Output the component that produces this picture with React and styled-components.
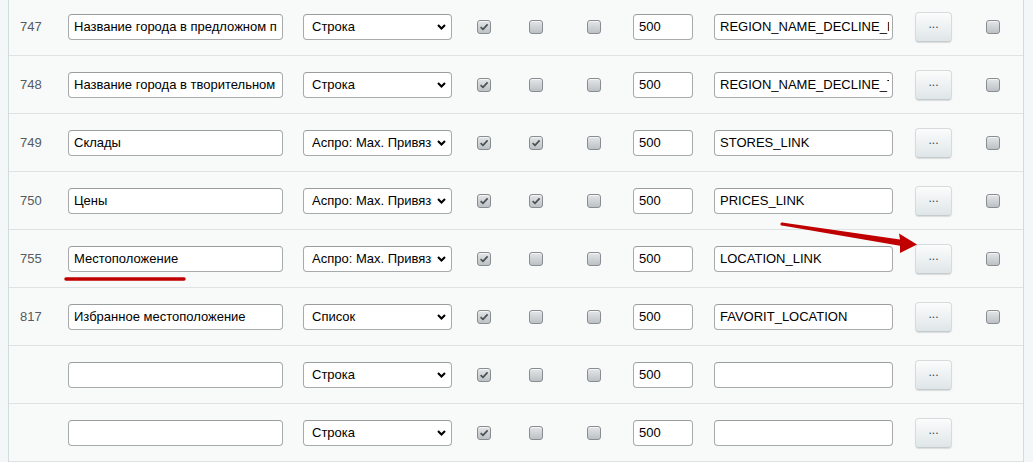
import styled, { createGlobalStyle } from "styled-components";

const GlobalStyle = createGlobalStyle`
  body {
    margin: 0;
    background: #f3f7f8;
    font-family: "Liberation Sans", Arial, sans-serif;
    font-size: 13px;
    overflow: hidden;
  }
`;

const Page = styled.div`
  position: relative;
  width: 1033px;
  height: 462px;
  overflow: hidden;
  padding: 0 9px 0 8px;
  box-sizing: border-box;
`;

const Table = styled.div`
  margin-top: -2px;
  background: #f8fafa;
  border-left: 1px solid #d3dbdc;
  border-right: 1px solid #d3dbdc;
`;

const Row = styled.div`
  display: grid;
  grid-template-columns: 59px 235px 174px 52px 58px 46px 81px 201px 71px 1fr;
  align-items: center;
  height: 57px;
  border-bottom: 1px solid #dde3e4;
`;

const Num = styled.div`
  padding-left: 11px;
  color: #555b5e;
`;

const Field = styled.input`
  box-sizing: border-box;
  width: ${(p) => p.$w}px;
  height: 26px;
  margin: 0;
  padding: 0 ${(p) => p.$pr ?? 3}px 0 5px;
  border: 1px solid #a7a9ab;
  border-top-color: #9a9c9e;
  border-radius: 4px;
  background: #fff;
  font-family: "Liberation Sans", Arial, sans-serif;
  font-size: 13px;
  color: #000;
  outline: none;
`;

const SelectBox = styled.div`
  box-sizing: border-box;
  width: 149px;
  height: 26px;
  display: flex;
  align-items: center;
  gap: 5px;
  padding: 0 5px 0 8px;
  border: 1px solid #a7a9ab;
  border-top-color: #9a9c9e;
  border-radius: 4px;
  background: #fff;
  color: #000;
`;

const SelectText = styled.span`
  flex: 1;
  overflow: hidden;
  white-space: nowrap;
`;

const Check = styled.span`
  box-sizing: border-box;
  width: 14px;
  height: 14px;
  display: flex;
  align-items: center;
  justify-content: center;
  border: 1px solid #888d91;
  border-radius: 3px;
  background: linear-gradient(#e3e6e8, #bcc1c5);
  box-shadow: inset 0 1px 0 rgba(255, 255, 255, 0.6);
`;

const DotsButton = styled.button`
  width: 37px;
  height: 30px;
  padding: 0 0 6px;
  border: 1px solid #d6dbdd;
  border-bottom-color: #c5cbce;
  border-radius: 4px;
  background: linear-gradient(#fbfcfc, #dfe6e8);
  box-shadow: 0 1px 1px rgba(0, 0, 0, 0.12);
  font-family: "Liberation Sans", Arial, sans-serif;
  font-size: 12px;
  font-weight: normal;
  color: #2f4458;
  line-height: 1;
`;

const Overlay = styled.svg`
  position: absolute;
  left: 0;
  top: 0;
  pointer-events: none;
`;

const Chevron = () => (
  <svg width="9" height="6" viewBox="0 0 9 6">
    <path d="M1 1 L4.5 4.5 L8 1" fill="none" stroke="#000" strokeWidth="2.1" />
  </svg>
);

const Checkbox = ({ checked }) => (
  <Check>
    {checked && (
      <svg width="10" height="10" viewBox="0 0 10 10">
        <path d="M1.6 5.2 L4 7.4 L8.6 2.4" fill="none" stroke="#4b5053" strokeWidth="1.7" />
      </svg>
    )}
  </Check>
);

const ASPRO = "Аспро: Max. Привязка к элементам";

const rows = [
  { id: "747", name: "Название города в предложном падеже", type: "Строка", flags: [1, 0, 0], code: "REGION_NAME_DECLINE_PP" },
  { id: "748", name: "Название города в творительном падеже", type: "Строка", flags: [1, 0, 0], code: "REGION_NAME_DECLINE_TP" },
  { id: "749", name: "Склады", type: ASPRO, flags: [1, 1, 0], code: "STORES_LINK" },
  { id: "750", name: "Цены", type: ASPRO, flags: [1, 1, 0], code: "PRICES_LINK" },
  { id: "755", name: "Местоположение", type: ASPRO, flags: [1, 0, 0], code: "LOCATION_LINK" },
  { id: "817", name: "Избранное местоположение", type: "Список", flags: [1, 0, 0], code: "FAVORIT_LOCATION" },
  { id: "", name: "", type: "Строка", flags: [1, 0, 0], code: "" },
  { id: "", name: "", type: "Строка", flags: [1, 0, 0], code: "" },
];

const App = () => {
  return (
    <>
      <GlobalStyle />
      <Page>
        <Table>
          {rows.map((r, i) => (
            <Row key={i}>
              <Num>{r.id}</Num>
              <Field $w={215} $pr={5} defaultValue={r.name} />
              <SelectBox>
                <SelectText>{r.type}</SelectText>
                <Chevron />
              </SelectBox>
              {r.flags.map((f, j) => (
                <Checkbox key={j} checked={!!f} />
              ))}
              <Field $w={60} defaultValue="500" />
              <Field $w={179} defaultValue={r.code} />
              <DotsButton>...</DotsButton>
              {r.id && <Checkbox />}
            </Row>
          ))}
        </Table>
        <Overlay width="1033" height="462">
          <line x1="66" y1="279" x2="184" y2="279" stroke="#c00000" strokeWidth="3.5" strokeLinecap="round" />
          <circle cx="782" cy="224" r="1.6" fill="#c00000" />
          <polygon
            points="782,222.4 900,239.6 899,233.5 917,244.5 900,253 900,245.8 782,225.6"
            fill="#c00000"
          />
        </Overlay>
      </Page>
    </>
  );
};

export default App;
